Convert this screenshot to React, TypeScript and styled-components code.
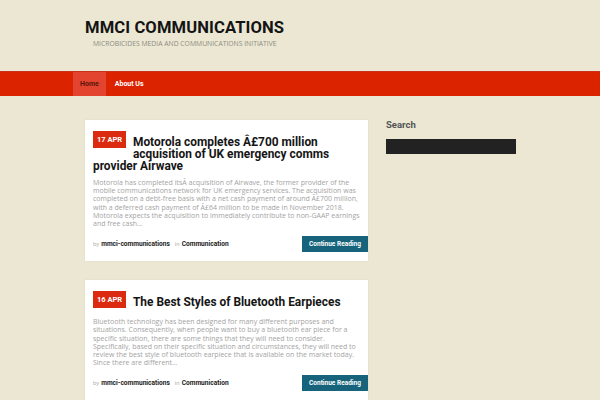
import React from 'react';
import styled, { createGlobalStyle } from 'styled-components';

const GlobalStyle = createGlobalStyle`
  html, body {
    margin: 0;
    padding: 0;
    background: #ebe7d3;
  }
  * {
    box-sizing: border-box;
  }
`;

interface Post {
  date: string;
  title: string;
  excerpt: string;
  author: string;
  category: string;
}

const posts: Post[] = [
  {
    date: '17 APR',
    title: 'Motorola completes Â£700 million acquisition of UK emergency comms provider Airwave',
    excerpt:
      'Motorola has completed itsÂ acquisition of Airwave, the former provider of the mobile communications network for UK emergency services. The acquisition was completed on a debt-free basis with a net cash payment of around Â£700 million, with a deferred cash payment of Â£64 million to be made in November 2018. Motorola expects the acquisition to immediately contribute to non-GAAP earnings and free cash…',
    author: 'mmci-communications',
    category: 'Communication',
  },
  {
    date: '16 APR',
    title: 'The Best Styles of Bluetooth Earpieces',
    excerpt:
      'Bluetooth technology has been designed for many different purposes and situations. Consequently, when people want to buy a bluetooth ear piece for a specific situation, there are some things that they will need to consider. Specifically, based on their specific situation and circumstances, they will need to review the best style of bluetooth earpiece that is available on the market today. Since there are different…',
    author: 'mmci-communications',
    category: 'Communication',
  },
];

export default function App() {
  return (
    <Page>
      <GlobalStyle />
      <Header>
        <SiteTitle>MMCI COMMUNICATIONS</SiteTitle>
        <Tagline>Microbicides Media and Communications Initiative</Tagline>
      </Header>
      <NavBar>
        <NavItem active>Home</NavItem>
        <NavItem>About Us</NavItem>
      </NavBar>
      <Layout>
        <Posts>
          {posts.map((post) => (
            <Card key={post.title}>
              <Badge>{post.date}</Badge>
              <PostTitle>{post.title}</PostTitle>
              <Excerpt>{post.excerpt}</Excerpt>
              <Meta>
                <MetaInfo>
                  <Muted>by</Muted>
                  <Strong>{post.author}</Strong>
                  <Muted>in</Muted>
                  <Strong>{post.category}</Strong>
                </MetaInfo>
                <ReadButton>Continue Reading</ReadButton>
              </Meta>
            </Card>
          ))}
        </Posts>
        <Sidebar>
          <WidgetTitle>Search</WidgetTitle>
          <SearchInput />
        </Sidebar>
      </Layout>
    </Page>
  );
}

const Page = styled.div`
  width: 600px;
  height: 400px;
  overflow: hidden;
  background: #ebe7d3;
`;

const Header = styled.header`
  display: flex;
  flex-direction: column;
  padding: 18px 0 0 85px;
  height: 71px;
`;

const SiteTitle = styled.h1`
  margin: 0;
  font-family: Roboto, 'Liberation Sans', sans-serif;
  font-weight: 700;
  font-size: 16.6px;
  line-height: 20px;
  color: #141414;
  letter-spacing: 0.1px;
`;

const Tagline = styled.p`
  margin: 1px 0 0 8px;
  font-family: 'Open Sans', 'Liberation Sans', sans-serif;
  font-size: 6.8px;
  line-height: 10px;
  text-transform: uppercase;
  color: #8e8c82;
`;

const NavBar = styled.nav`
  display: flex;
  height: 25px;
  padding-left: 73px;
  background: #dc2300;
  border-top: 1px solid #c9311c;
`;

const NavItem = styled.a<{ active?: boolean }>`
  display: flex;
  align-items: center;
  padding: 0 7px;
  margin-right: 2px;
  font-family: Roboto, 'Liberation Sans', sans-serif;
  font-weight: 700;
  font-size: 7px;
  color: ${(p) => (p.active ? '#5a140a' : '#ffffff')};
  background: ${(p) => (p.active ? '#e2442f' : 'transparent')};
`;

const Layout = styled.div`
  display: grid;
  grid-template-columns: 283px 130px;
  gap: 18px;
  padding: 24px 0 0 85px;
`;

const Posts = styled.main`
  display: flex;
  flex-direction: column;
  gap: 19px;
`;

const Card = styled.article`
  background: #ffffff;
  padding: 11px 0 9px 8px;
  box-shadow: 0 0 1px rgba(0, 0, 0, 0.12);
  display: flow-root;
`;

const Badge = styled.span`
  float: left;
  margin: 0 7px 10px 0;
  width: 33px;
  height: 17px;
  display: flex;
  align-items: center;
  justify-content: center;
  background: #dc2a10;
  color: #ffffff;
  font-family: Roboto, 'Liberation Sans', sans-serif;
  font-weight: 700;
  font-size: 7.5px;
`;

const PostTitle = styled.h2`
  margin: 5px 12px 0 0;
  font-family: Roboto, 'Liberation Sans', sans-serif;
  font-weight: 700;
  font-size: 11.9px;
  line-height: 12px;
  color: #161616;
`;

const Excerpt = styled.p`
  clear: both;
  margin: 7px 5px 0 0;
  font-family: 'Open Sans', 'Liberation Sans', sans-serif;
  font-size: 7px;
  line-height: 8.2px;
  color: #a3a3a3;
`;

const Meta = styled.div`
  display: flex;
  align-items: center;
  justify-content: space-between;
  margin-top: 8px;
`;

const MetaInfo = styled.div`
  display: flex;
  align-items: baseline;
  gap: 2px;
  font-family: Roboto, 'Liberation Sans', sans-serif;
`;

const Muted = styled.span`
  font-size: 6px;
  color: #b4b4b4;
`;

const Strong = styled.span`
  font-size: 6.6px;
  font-weight: 700;
  color: #222222;
  margin-right: 3px;
`;

const ReadButton = styled.button`
  width: 66px;
  height: 16px;
  padding: 0;
  border: none;
  background: #17637b;
  color: #ffffff;
  font-family: Roboto, 'Liberation Sans', sans-serif;
  font-weight: 700;
  font-size: 6.5px;
`;

const Sidebar = styled.aside`
  display: flex;
  flex-direction: column;
`;

const WidgetTitle = styled.h3`
  margin: -1px 0 0 0;
  font-family: Roboto, 'Liberation Sans', sans-serif;
  font-weight: 700;
  font-size: 9.5px;
  line-height: 12px;
  color: #555555;
`;

const SearchInput = styled.div`
  margin-top: 8px;
  width: 130px;
  height: 15px;
  background: #222222;
`;
